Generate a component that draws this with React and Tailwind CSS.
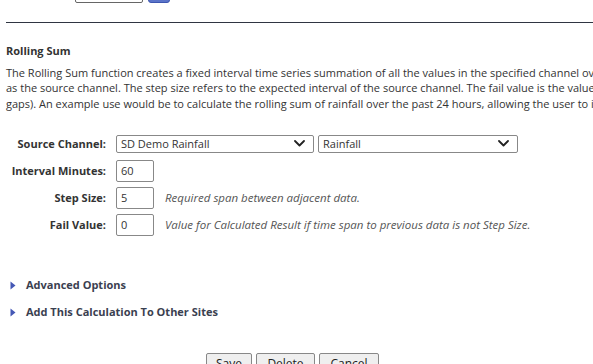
import React from "react";

const Chevron = () => (
  <svg width="11" height="7" viewBox="0 0 11 7" className="shrink-0">
    <path d="M1 1 L5.5 5.5 L10 1" fill="none" stroke="#222" strokeWidth="1.8" strokeLinecap="round" strokeLinejoin="round" />
  </svg>
);

const Select = ({ value, w }) => (
  <div className={`${w} h-[18px] border border-[#888] rounded-[2px] flex items-center justify-between pl-[4px] pr-[8px] bg-white`}>
    <span>{value}</span>
    <Chevron />
  </div>
);

const Input = ({ value }) => (
  <div className="w-[38px] h-[22px] border border-[#888] rounded-[2px] flex items-center pl-[4px] bg-white">{value}</div>
);

const Row = ({ label, children }) => (
  <div className="h-[27px] flex items-center">
    <div className="w-[100px] text-right font-bold text-[#333] whitespace-nowrap">{label}</div>
    <div className="ml-[10px] flex items-center">{children}</div>
  </div>
);

const Triangle = () => (
  <svg width="6" height="9" viewBox="0 0 6 9" className="shrink-0">
    <path d="M0.5 0.5 L5.5 4.5 L0.5 8.5 Z" fill="#4558b5" />
  </svg>
);

export default function App() {
  return (
    <div
      className="w-[593px] h-[364px] overflow-hidden bg-white text-[11px] text-[#333]"
      style={{ fontFamily: '"Open Sans", "DejaVu Sans", sans-serif' }}
    >
      <div className="h-[3px] overflow-hidden flex items-end">
        <div className="ml-[75px] w-[68px] h-[20px] border border-[#666] rounded-[2px]" />
        <div className="ml-[5px] w-[22px] h-[20px] bg-[#5b74c9] border border-[#3d56b0] rounded-[3px]" />
      </div>
      <div className="ml-[6px] mt-[19px] border-t border-[#2f3542]" />
      <div className="ml-[6px] mt-[19.5px] font-bold leading-[15px] whitespace-nowrap">Rolling Sum</div>
      <div className="ml-[6px] mt-[7px] leading-[15.5px] whitespace-nowrap">
        <div>The Rolling Sum function creates a fixed interval time series summation of all the values in the specified channel ov</div>
        <div>as the source channel. The step size refers to the expected interval of the source channel. The fail value is the value</div>
        <div>gaps). An example use would be to calculate the rolling sum of rainfall over the past 24 hours, allowing the user to i</div>
      </div>
      <div className="ml-[6px] mt-[19.25px]">
        <Row label="Source Channel:">
          <Select value="SD Demo Rainfall" w="w-[198px]" />
          <div className="ml-[4px]"><Select value="Rainfall" w="w-[200px]" /></div>
        </Row>
        <Row label="Interval Minutes:">
          <Input value="60" />
        </Row>
        <Row label="Step Size:">
          <Input value="5" />
          <span className="ml-[11px] italic text-[11.5px] text-[#555] whitespace-nowrap">Required span between adjacent data.</span>
        </Row>
        <Row label="Fail Value:">
          <Input value="0" />
          <span className="ml-[11px] italic text-[11.5px] text-[#555] whitespace-nowrap">Value for Calculated Result if time span to previous data is not Step Size.</span>
        </Row>
      </div>
      <div className="mt-[33.5px] ml-[10px]">
        <div className="h-[27px] flex items-center">
          <Triangle />
          <span className="ml-[10px] font-bold text-[#3a4050]">Advanced Options</span>
        </div>
        <div className="h-[27px] flex items-center">
          <Triangle />
          <span className="ml-[10px] font-bold text-[#3a4050]">Add This Calculation To Other Sites</span>
        </div>
      </div>
      <div className="mt-[27.5px] ml-[206px] flex gap-[4px] text-[12px] text-[#222]">
        <button className="w-[46px] h-[22px] border border-[#888] rounded-[2px] bg-[#efefef]">Save</button>
        <button className="w-[59px] h-[22px] border border-[#888] rounded-[2px] bg-[#efefef]">Delete</button>
        <button className="w-[60px] h-[22px] border border-[#888] rounded-[2px] bg-[#efefef]">Cancel</button>
      </div>
    </div>
  );
}
